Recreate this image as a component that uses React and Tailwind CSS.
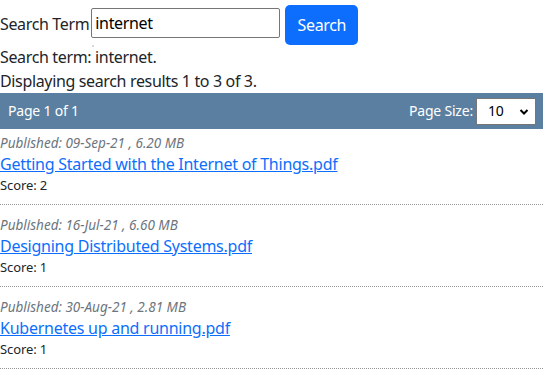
import React from "react";

const items = [
  { pub: "Published: 09-Sep-21 , 6.20 MB", name: "Getting Started with the Internet of Things.pdf", score: 2 },
  { pub: "Published: 16-Jul-21 , 6.60 MB", name: "Designing Distributed Systems.pdf", score: 1 },
  { pub: "Published: 30-Aug-21 , 2.81 MB", name: "Kubernetes up and running.pdf", score: 1 },
];

export default function App() {
  return (
    <div className="w-[547px] h-[372px] overflow-hidden bg-white font-['Noto_Sans',sans-serif] text-[16px] leading-[24px] tracking-[-0.35px] text-[#212529]">
      <div className="w-[543px]">
        <div className="flex items-start pt-[5px]">
          <label className="mt-[7px] mr-[2px]">Search Term</label>
          <div className="relative">
            <input
              defaultValue="internet"
              className="mt-[3px] w-[189px] h-[30px] border border-[#767676] rounded-[2px] px-[3px] text-[16px] tracking-[-0.35px] text-black outline-none"
            />
            <span className="absolute left-[1px] top-[40px] w-[2px] h-[2px] bg-[#d8d8d8]" />
          </div>
          <button className="ml-[5px] w-[73px] h-[40px] rounded-[5px] bg-[#0d6efd] text-white text-[16px]">Search</button>
        </div>
        <div>Search term: internet.</div>
        <div>Displaying search results 1 to 3 of 3.</div>
        <div className="h-[36px] bg-[#5b7fa0] flex items-center justify-between pl-[8px] pr-[7px] text-white text-[14px] tracking-[-0.2px]">
          <span>Page 1 of 1</span>
          <div className="flex items-center gap-[3px]">
            <span>Page Size:</span>
            <div className="relative w-[60px] h-[27px] bg-white border border-[#767676] text-black text-[14px] flex items-center pl-[11px]">
              <span>10</span>
              <svg className="absolute right-[6px] top-[9px]" width="10" height="8" viewBox="0 0 10 8">
                <path d="M1.5 2 L5 5.5 L8.5 2" stroke="black" strokeWidth="2" fill="none" />
              </svg>
            </div>
          </div>
        </div>
        {items.map((it, i) => (
          <div key={i} className={`${i === 0 ? "pt-[4px]" : "pt-[10px]"} pb-[9px] border-b border-dotted border-[#999]`}>
            <div className="italic text-[13.5px] leading-[20px] tracking-[0px] text-[#6c757d]">{it.pub}</div>
            <a href="#" className="block text-[#0d6efd] underline leading-[22px] tracking-[-0.25px]">{it.name}</a>
            <div className="text-[13px] leading-[20px] tracking-[-0.1px] text-[#212529]">Score: {it.score}</div>
          </div>
        ))}
      </div>
    </div>
  );
}
